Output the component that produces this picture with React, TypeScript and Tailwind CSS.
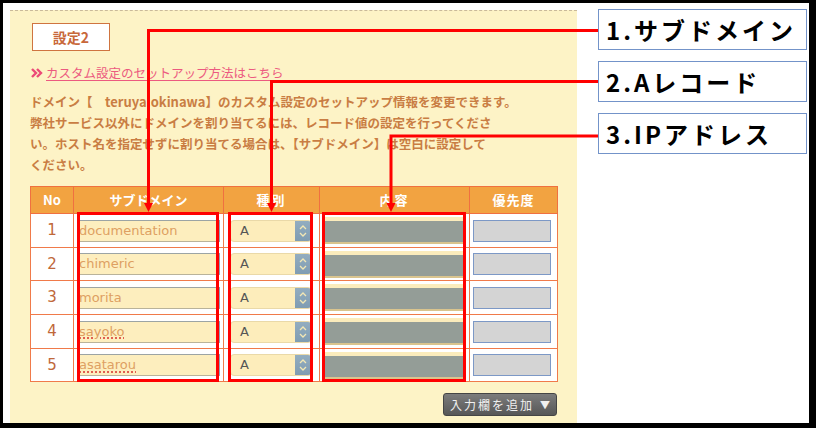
import React from 'react'

const rows = [
  { no: 1, sub: 'documentation', h: 'h-[34px]', spell: false },
  { no: 2, sub: 'chimeric', h: 'h-[33px]', spell: false },
  { no: 3, sub: 'morita', h: 'h-[34px]', spell: false },
  { no: 4, sub: 'sayoko', h: 'h-[34px]', spell: true },
  { no: 5, sub: 'asatarou', h: 'h-[33px]', spell: true },
]

const labels = ['1.サブドメイン', '2.Aレコード', '3.IPアドレス']

const jp = { fontFamily: '"Noto Sans CJK JP", "Noto Sans", sans-serif' }

function SelectBox() {
  return (
    <div className="flex h-[22px] w-[82px] overflow-hidden rounded-[4px] border border-[#ead9a8] bg-[#fdedbb]">
      <span className="flex-1 pl-[9px] text-[13px] leading-[20px] text-[#555]" style={{ fontFamily: '"DejaVu Sans", sans-serif' }}>
        A
      </span>
      <span className="flex w-[16px] items-center justify-center bg-gradient-to-b from-[#93adc0] to-[#7f9cb2]">
        <svg width="8" height="14" viewBox="0 0 8 14" fill="none" stroke="#f3e7b5" strokeWidth="1.3">
          <path d="M1 5 L4 2 L7 5" />
          <path d="M1 9 L4 12 L7 9" />
        </svg>
      </span>
    </div>
  )
}

// red callout lines + boxes drawn over the screenshot
function Annotations() {
  return (
    <svg className="pointer-events-none absolute left-0 top-0" width="816" height="428" fill="none">
      <g stroke="#ff0000" strokeWidth="3">
        <polyline points="598,30.5 148.5,30.5 148.5,205" />
        <polyline points="598,81.5 271.5,81.5 271.5,205" />
        <polyline points="598,136 391,136 391,205" />
        <rect x="78.5" y="213.5" width="139" height="167" />
        <rect x="229.5" y="213.5" width="82" height="167" />
        <rect x="323.5" y="213.5" width="141" height="167" />
      </g>
      <g fill="#ff0000">
        <polygon points="144,203 153,203 148.5,212" />
        <polygon points="267,203 276,203 271.5,212" />
        <polygon points="386.5,203 395.5,203 391,212" />
      </g>
    </svg>
  )
}

export default function App() {
  return (
    <div className="relative h-[428px] w-[816px] bg-black pb-[5px] pl-[3px] pr-[7px] pt-[3px]">
      <div className="flex h-full bg-white">
        <div className="ml-[7px] mt-[7px] flex w-[567px] flex-col border-t border-dashed border-[#c9b99a] bg-[#fdf3c6] px-5" style={jp}>
          <div className="ml-[2px] mt-[12px] flex h-[28px] w-[78px] items-center justify-center border border-[#cf7440] bg-white text-[14px] font-bold text-[#c8683a]">
            設定2
          </div>

          <div className="mt-[12px] flex h-[20px] items-center text-[12.5px] text-[#ec5a80]">
            <svg width="12" height="10" viewBox="0 0 12 10" fill="none" stroke="#ec4a78" strokeWidth="2.4" className="ml-[1px]">
              <path d="M1 1 L5 5 L1 9" />
              <path d="M6 1 L10 5 L6 9" />
            </svg>
            <span className="ml-[3px] underline underline-offset-2">カスタム設定のセットアップ方法はこちら</span>
          </div>

          <p className="mt-[8px] text-[12.5px] font-bold leading-[21px] text-[#c97d43]">
            ドメイン【　<span className="text-[13px]">teruya.okinawa</span>】のカスタム設定のセットアップ情報を変更できます。
            <br />
            弊社サービス以外にドメインを割り当てるには、レコード値の設定を行ってくださ
            <br />
            い。ホスト名を指定せずに割り当てる場合は、【サブドメイン】は空白に設定して
            <br />
            ください。
          </p>

          <table className="mt-[11px] w-[527px] table-fixed border-collapse">
            <colgroup>
              <col className="w-[43px]" />
              <col className="w-[150px]" />
              <col className="w-[96px]" />
              <col className="w-[150px]" />
              <col className="w-[88px]" />
            </colgroup>
            <thead>
              <tr className="h-[27px] bg-[#f2a341] text-[13px] font-bold text-white">
                <th className="border border-[#f07040]">No</th>
                <th className="border border-[#f07040]">サブドメイン</th>
                <th className="border border-[#f07040] tracking-[2px]">種別</th>
                <th className="border border-[#f07040] tracking-[2px]">内容</th>
                <th className="border border-[#f07040] tracking-[1px]">優先度</th>
              </tr>
            </thead>
            <tbody>
              {rows.map(r => (
                <tr key={r.no} className={`${r.h} bg-white`}>
                  <td className="border border-[#f07a4a] text-center text-[15px] text-[#c0683a]" style={{ fontFamily: '"DejaVu Sans", sans-serif' }}>
                    {r.no}
                  </td>
                  <td className="border border-[#f07a4a] pl-[5px]">
                    <div className="flex h-[22px] w-[141px] items-center border-b border-r-2 border-t border-b-[#b9b39a] border-r-[#8fa3b5] border-t-[#9ca4a4] bg-[#fdeebe]">
                      <span
                        className={`text-[13px] text-[#dea062] ${r.spell ? 'underline decoration-[#e06050] decoration-dotted decoration-2 underline-offset-2' : ''}`}
                        style={{ fontFamily: '"DejaVu Sans", sans-serif' }}
                      >
                        {r.sub}
                      </span>
                    </div>
                  </td>
                  <td className="border border-[#f07a4a] pl-[6px]">
                    <SelectBox />
                  </td>
                  <td className="border border-[#f07a4a] px-[5px] py-[2px]">
                    <div className="flex h-full w-[138px] flex-col bg-[#fbecbc] pt-[4px]">
                      <div className="h-[21px] bg-[#949d97]" />
                      <div className="h-[2px] bg-[#d9c48e]" />
                    </div>
                  </td>
                  <td className="border border-[#f07a4a] pl-[3px]">
                    <div className="h-[22px] w-[78px] border-[1.5px] border-[#7c98c6] bg-[#d4d4d4]" />
                  </td>
                </tr>
              ))}
            </tbody>
          </table>

          <div className="mt-[11px] flex justify-end">
            <div className="flex h-[23px] w-[114px] items-center justify-center gap-[6px] rounded-[3px] border border-[#454545] bg-gradient-to-b from-[#7c7c7c] to-[#575757] text-[12px] tracking-[2px] text-[#f0f0f0]">
              <span>入力欄を追加</span>
              <span className="text-[10px] tracking-normal">▼</span>
            </div>
          </div>
        </div>

        <div className="flex flex-col gap-[11px] pl-[21px] pt-[6px]" style={jp}>
          {labels.map(l => (
            <div key={l} className="flex h-[41px] w-[209px] items-center border border-[#7393c9] bg-white pl-[7px] text-[24px] font-bold tracking-[3px] text-black">
              {l}
            </div>
          ))}
        </div>
      </div>
      <Annotations />
    </div>
  )
}
